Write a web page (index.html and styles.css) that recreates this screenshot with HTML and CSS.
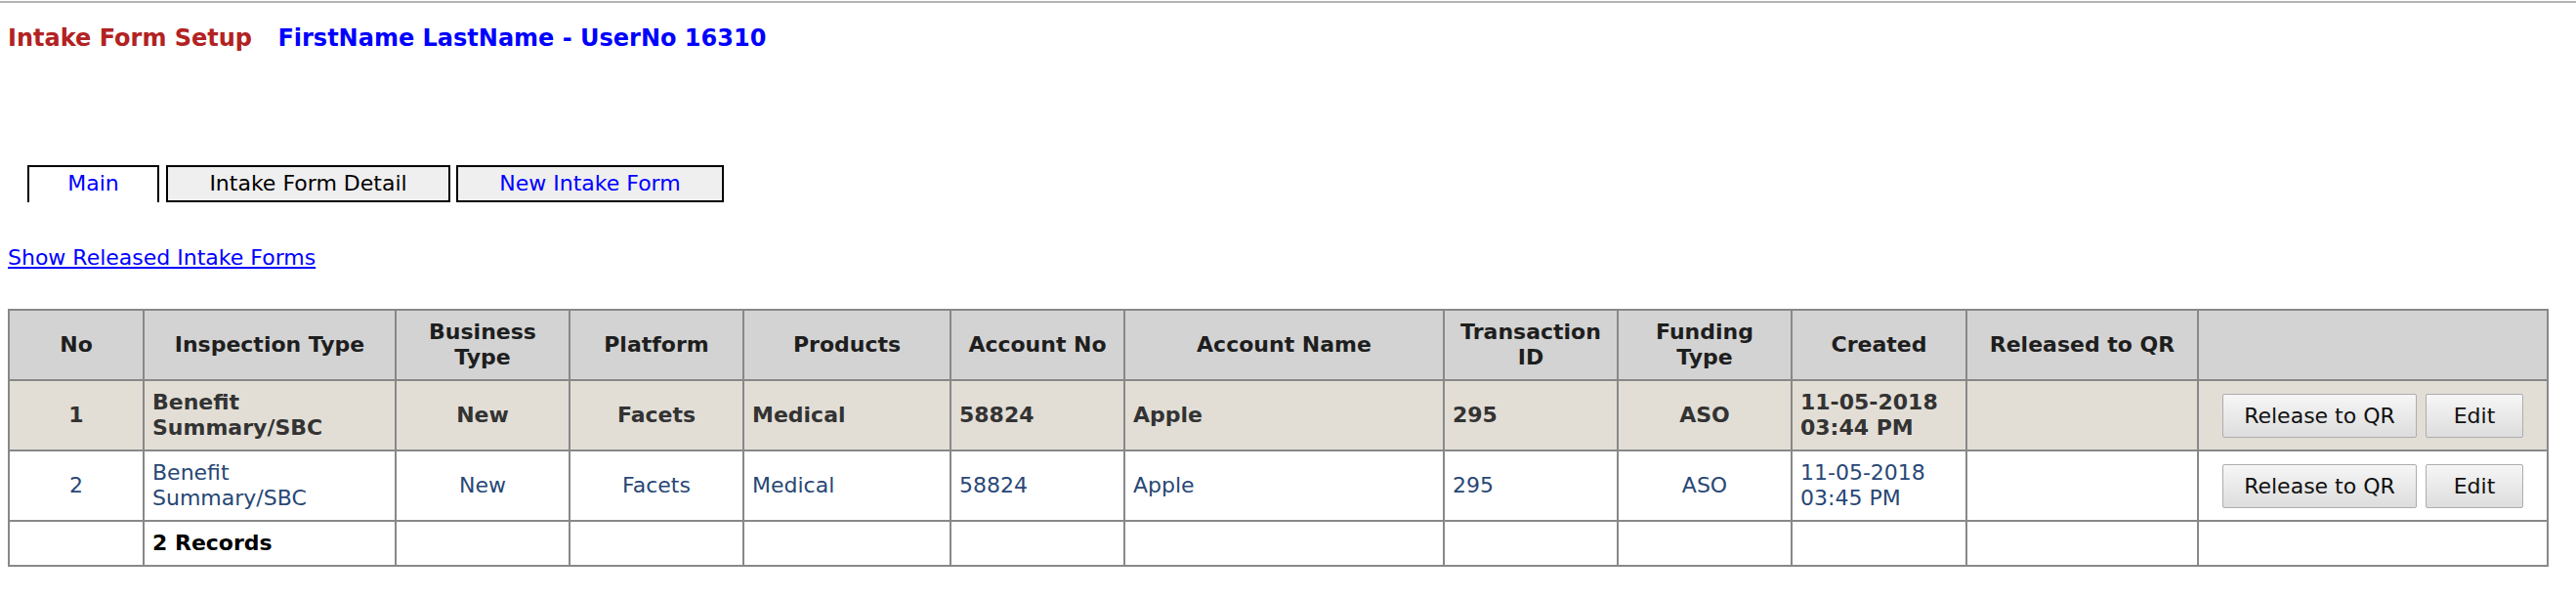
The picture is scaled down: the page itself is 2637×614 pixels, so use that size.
FILE: index.html
```html
<!DOCTYPE html>
<html lang="en">
<head>
    <meta charset="UTF-8">
    <title>Intake Form Setup</title>
    <link rel="stylesheet" href="styles.css">
</head>
<body>
    <div class="topline"></div>

    <div class="page-title">
        <span class="title-red">Intake Form Setup</span>
        <span class="title-blue">FirstName LastName - UserNo 16310</span>
    </div>

    <div class="tabs">
        <div class="tab tab-main active">Main</div>
        <div class="tab tab-detail">Intake Form Detail</div>
        <div class="tab tab-new">New Intake Form</div>
    </div>

    <a href="#" class="released-link">Show Released Intake Forms</a>

    <table class="grid">
        <colgroup>
            <col style="width:138px">
            <col style="width:258px">
            <col style="width:178px">
            <col style="width:178px">
            <col style="width:212px">
            <col style="width:178px">
            <col style="width:327px">
            <col style="width:178px">
            <col style="width:178px">
            <col style="width:179px">
            <col style="width:237px">
            <col style="width:358px">
        </colgroup>
        <thead>
            <tr>
                <th>No</th>
                <th>Inspection Type</th>
                <th>Business<br>Type</th>
                <th>Platform</th>
                <th>Products</th>
                <th>Account No</th>
                <th>Account Name</th>
                <th>Transaction<br>ID</th>
                <th>Funding<br>Type</th>
                <th>Created</th>
                <th>Released to QR</th>
                <th></th>
            </tr>
        </thead>
        <tbody>
            <tr class="row-selected">
                <td class="center">1</td>
                <td>Benefit<br>Summary/SBC</td>
                <td class="center">New</td>
                <td class="center">Facets</td>
                <td>Medical</td>
                <td>58824</td>
                <td>Apple</td>
                <td>295</td>
                <td class="center">ASO</td>
                <td>11-05-2018<br>03:44 PM</td>
                <td></td>
                <td class="actions">
                    <div class="btn-group">
                        <button class="btn btn-release">Release to QR</button>
                        <button class="btn btn-edit">Edit</button>
                    </div>
                </td>
            </tr>
            <tr class="row-alt">
                <td class="center">2</td>
                <td>Benefit<br>Summary/SBC</td>
                <td class="center">New</td>
                <td class="center">Facets</td>
                <td>Medical</td>
                <td>58824</td>
                <td>Apple</td>
                <td>295</td>
                <td class="center">ASO</td>
                <td>11-05-2018<br>03:45 PM</td>
                <td></td>
                <td class="actions">
                    <div class="btn-group">
                        <button class="btn btn-release">Release to QR</button>
                        <button class="btn btn-edit">Edit</button>
                    </div>
                </td>
            </tr>
            <tr class="row-footer">
                <td></td>
                <td>2 Records</td>
                <td></td>
                <td></td>
                <td></td>
                <td></td>
                <td></td>
                <td></td>
                <td></td>
                <td></td>
                <td></td>
                <td></td>
            </tr>
        </tbody>
    </table>
</body>
</html>
```

FILE: styles.css
```css
body {
    margin: 0;
    font-family: "DejaVu Sans", Verdana, sans-serif;
    background: #fff;
    color: #000;
}
.topline {
    margin-top: 1px;
    border-top: 2px solid #b4b4b4;
}
.page-title {
    margin: 22px 0 0 8px;
    font-size: 24px;
    line-height: 29px;
    font-weight: bold;
    white-space: nowrap;
}
.title-red {
    color: #b22222;
}
.title-blue {
    color: #0000ff;
    margin-left: 18px;
}
.tabs {
    display: flex;
    margin: 115px 0 0 28px;
}
.tab {
    height: 34px;
    line-height: 34px;
    font-size: 22px;
    text-align: center;
    border: 2px solid #000;
    background: #efefef;
    box-sizing: content-box;
}
.tab.active {
    background: #fff;
    border-bottom: none;
    height: 36px;
}
.tab-main {
    width: 131px;
    color: #0000ff;
}
.tab-detail {
    width: 287px;
    margin-left: 7px;
    color: #000;
}
.tab-new {
    width: 270px;
    margin-left: 6px;
    color: #0000ff;
}
.released-link {
    display: inline-block;
    margin: 44px 0 0 8px;
    font-size: 22px;
    line-height: 26px;
    color: #0000ff;
}
.grid {
    margin: 39px 0 0 8px;
    width: 2599px;
    table-layout: fixed;
    border-collapse: collapse;
    font-size: 22px;
    line-height: 26px;
}
.grid th,
.grid td {
    border: 2px solid #888;
    padding: 9px 8px;
    vertical-align: middle;
    text-align: left;
}
.grid th {
    background: #d3d3d3;
    color: #1e1e1e;
    font-weight: bold;
    text-align: center;
}
.grid td.center {
    text-align: center;
}
.row-selected td {
    background: #e2ded6;
    color: #333;
    font-weight: bold;
}
.row-alt td {
    background: #fff;
    color: #284775;
}
.row-footer td {
    font-weight: bold;
    color: #000;
}
.grid td.actions {
    padding-right: 24px;
}
.btn-group {
    display: flex;
    justify-content: flex-end;
    gap: 9px;
}
.btn {
    height: 45px;
    font-family: "DejaVu Sans", Verdana, sans-serif;
    font-size: 22px;
    font-weight: normal;
    color: #111;
    background: linear-gradient(#f6f6f6, #dddddd);
    border: 1px solid #adadad;
    border-radius: 2px;
    padding: 0;
    cursor: pointer;
}
.btn-release {
    width: 199px;
}
.btn-edit {
    width: 100px;
}
```
